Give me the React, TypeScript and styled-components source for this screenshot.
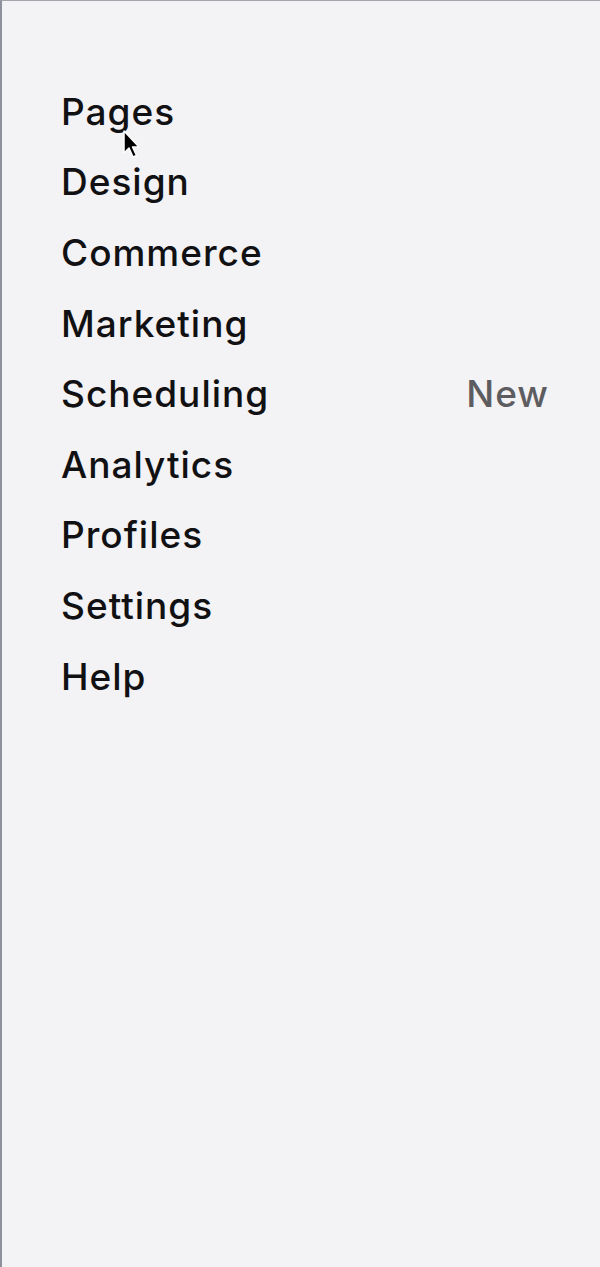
import styled, { createGlobalStyle } from 'styled-components';

const GlobalStyle = createGlobalStyle`
  html, body {
    margin: 0;
    padding: 0;
    background: #f3f2f4;
  }
  body {
    font-family: Inter, 'Liberation Sans', sans-serif;
  }
`;

const Panel = styled.div`
  position: relative;
  box-sizing: border-box;
  width: 600px;
  height: 1267px;
  background: #f3f2f4;
  border-top: 1px solid #a3a4ab;
  border-left: 2px solid #8e909b;
  padding: 75px 51px 0 59px;
`;

const NavList = styled.ul`
  list-style: none;
  margin: 0;
  padding: 0;
  display: flex;
  flex-direction: column;
`;

const NavItem = styled.li`
  display: flex;
  align-items: center;
  justify-content: space-between;
  height: 70.6px;
`;

const NavLink = styled.a`
  font-size: 37px;
  font-weight: 500;
  letter-spacing: 1px;
  color: #111113;
  text-decoration: none;
`;

const Tag = styled.span`
  font-size: 37px;
  font-weight: 500;
  letter-spacing: 1px;
  color: #5d5d61;
`;

// mouse pointer captured in the screenshot
const Pointer = styled.svg`
  position: absolute;
  left: 119px;
  top: 127px;
  width: 22px;
  height: 33px;
  pointer-events: none;
`;

const items = [
  { label: 'Pages' },
  { label: 'Design' },
  { label: 'Commerce' },
  { label: 'Marketing' },
  { label: 'Scheduling', tag: 'New' },
  { label: 'Analytics' },
  { label: 'Profiles' },
  { label: 'Settings' },
  { label: 'Help' },
];

function App() {
  return (
    <>
      <GlobalStyle />
      <Panel>
        <NavList>
          {items.map(item => (
            <NavItem key={item.label}>
              <NavLink href='#'>{item.label}</NavLink>
              {item.tag && <Tag>{item.tag}</Tag>}
            </NavItem>
          ))}
        </NavList>
        <Pointer viewBox='0 0 22 33'>
          <path
            d='M3 3 L3 25 L8 20 L12 29 L15.5 27.5 L11.5 19 L18 19 Z'
            fill='#000'
            stroke='#fff'
            strokeWidth='1.5'
            strokeLinejoin='round'
          />
        </Pointer>
      </Panel>
    </>
  );
}

export default App;
